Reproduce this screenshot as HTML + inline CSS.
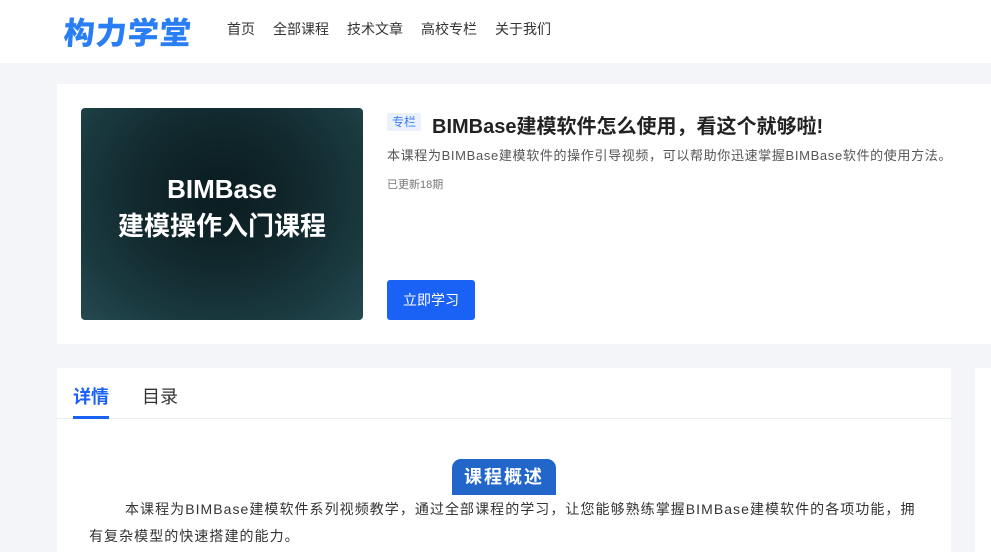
<!DOCTYPE html>
<html><head><meta charset="utf-8"><style>
*{margin:0;padding:0;box-sizing:border-box}
body{width:991px;height:552px;overflow:hidden;background:#f4f5f8;font-family:"Liberation Sans","Noto Sans CJK SC",sans-serif;position:relative}
.hdr{position:absolute;left:0;top:0;width:991px;height:63px;background:#fff}
.logo{position:absolute;left:64px;top:8px;font-size:31px;font-weight:900;color:#2a7ef5;letter-spacing:1px;transform:skewX(-4deg)}
.nav span{position:absolute;top:19px;font-size:14px;color:#333}
.card{position:absolute;left:57px;top:84px;width:934px;height:260px;background:#fff}
.img{position:absolute;left:81px;top:108px;width:282px;height:212px;border-radius:4px;overflow:hidden;
background:radial-gradient(ellipse at 50% 40%,#0a1c20 0%,#11282d 40%,#1a3a40 75%,#244a50 100%);}
.img .t1{position:absolute;top:66px;width:100%;text-align:center;color:#fff;font-size:26px;font-weight:bold}
.img .t2{position:absolute;top:98px;width:100%;text-align:center;color:#fff;font-size:26px;font-weight:bold}
.tag{position:absolute;left:387px;top:113px;width:34px;height:18px;background:#eaf1fd;color:#3b7cf0;font-size:12px;text-align:center;line-height:18px;border-radius:2px}
.title{position:absolute;left:432px;top:110px;font-size:20px;font-weight:bold;color:#222}
.desc{position:absolute;left:387px;top:145px;font-size:13px;color:#555;letter-spacing:0.65px;white-space:nowrap}
.upd{position:absolute;left:387px;top:176px;font-size:11px;color:#777}
.btn{position:absolute;left:387px;top:280px;width:88px;height:40px;background:#1a62f5;color:#fff;font-size:14px;text-align:center;line-height:40px;border-radius:3px}
.main{position:absolute;left:57px;top:368px;width:894px;height:184px;background:#fff}
.side{position:absolute;left:975px;top:368px;width:16px;height:184px;background:#fff}
.tabs{position:absolute;left:57px;top:368px;width:894px;height:51px;border-bottom:1px solid #ebedf0}
.tab1{position:absolute;left:16px;top:15px;font-size:18px;font-weight:bold;color:#1a62f5}
.tab2{position:absolute;left:85px;top:15px;font-size:18px;color:#333}
.ul{position:absolute;left:16px;top:48px;width:36px;height:3px;background:#1a62f5}
.badge{position:absolute;left:452px;top:459px;width:104px;height:36px;background:#2166c8;border-radius:9px 9px 0 0;color:#fff;font-size:18px;font-weight:bold;text-align:center;line-height:36px;letter-spacing:2px}
.para{position:absolute;left:89px;top:496px;width:880px;font-size:14px;color:#333;line-height:27px;text-indent:36px;letter-spacing:1.05px;white-space:nowrap}
</style></head><body>
<div class="hdr"><div class="logo">构力学堂</div>
<div class="nav"><span style="left:227px">首页</span><span style="left:273px">全部课程</span><span style="left:347px">技术文章</span><span style="left:421px">高校专栏</span><span style="left:495px">关于我们</span></div></div>
<div class="card"></div>
<div class="img"><div class="t1">BIMBase</div><div class="t2">建模操作入门课程</div></div>
<div class="tag">专栏</div>
<div class="title">BIMBase建模软件怎么使用，看这个就够啦!</div>
<div class="desc">本课程为BIMBase建模软件的操作引导视频，可以帮助你迅速掌握BIMBase软件的使用方法。</div>
<div class="upd">已更新18期</div>
<div class="btn">立即学习</div>
<div class="main"></div><div class="side"></div>
<div class="tabs"><div class="tab1">详情</div><div class="tab2">目录</div><div class="ul"></div></div>
<div class="badge">课程概述</div>
<div class="para">本课程为BIMBase建模软件系列视频教学，通过全部课程的学习，让您能够熟练掌握BIMBase建模软件的各项功能，拥<br><span style="display:inline-block;margin-left:-36px">有复杂模型的快速搭建的能力。</span></div>
</body></html>
